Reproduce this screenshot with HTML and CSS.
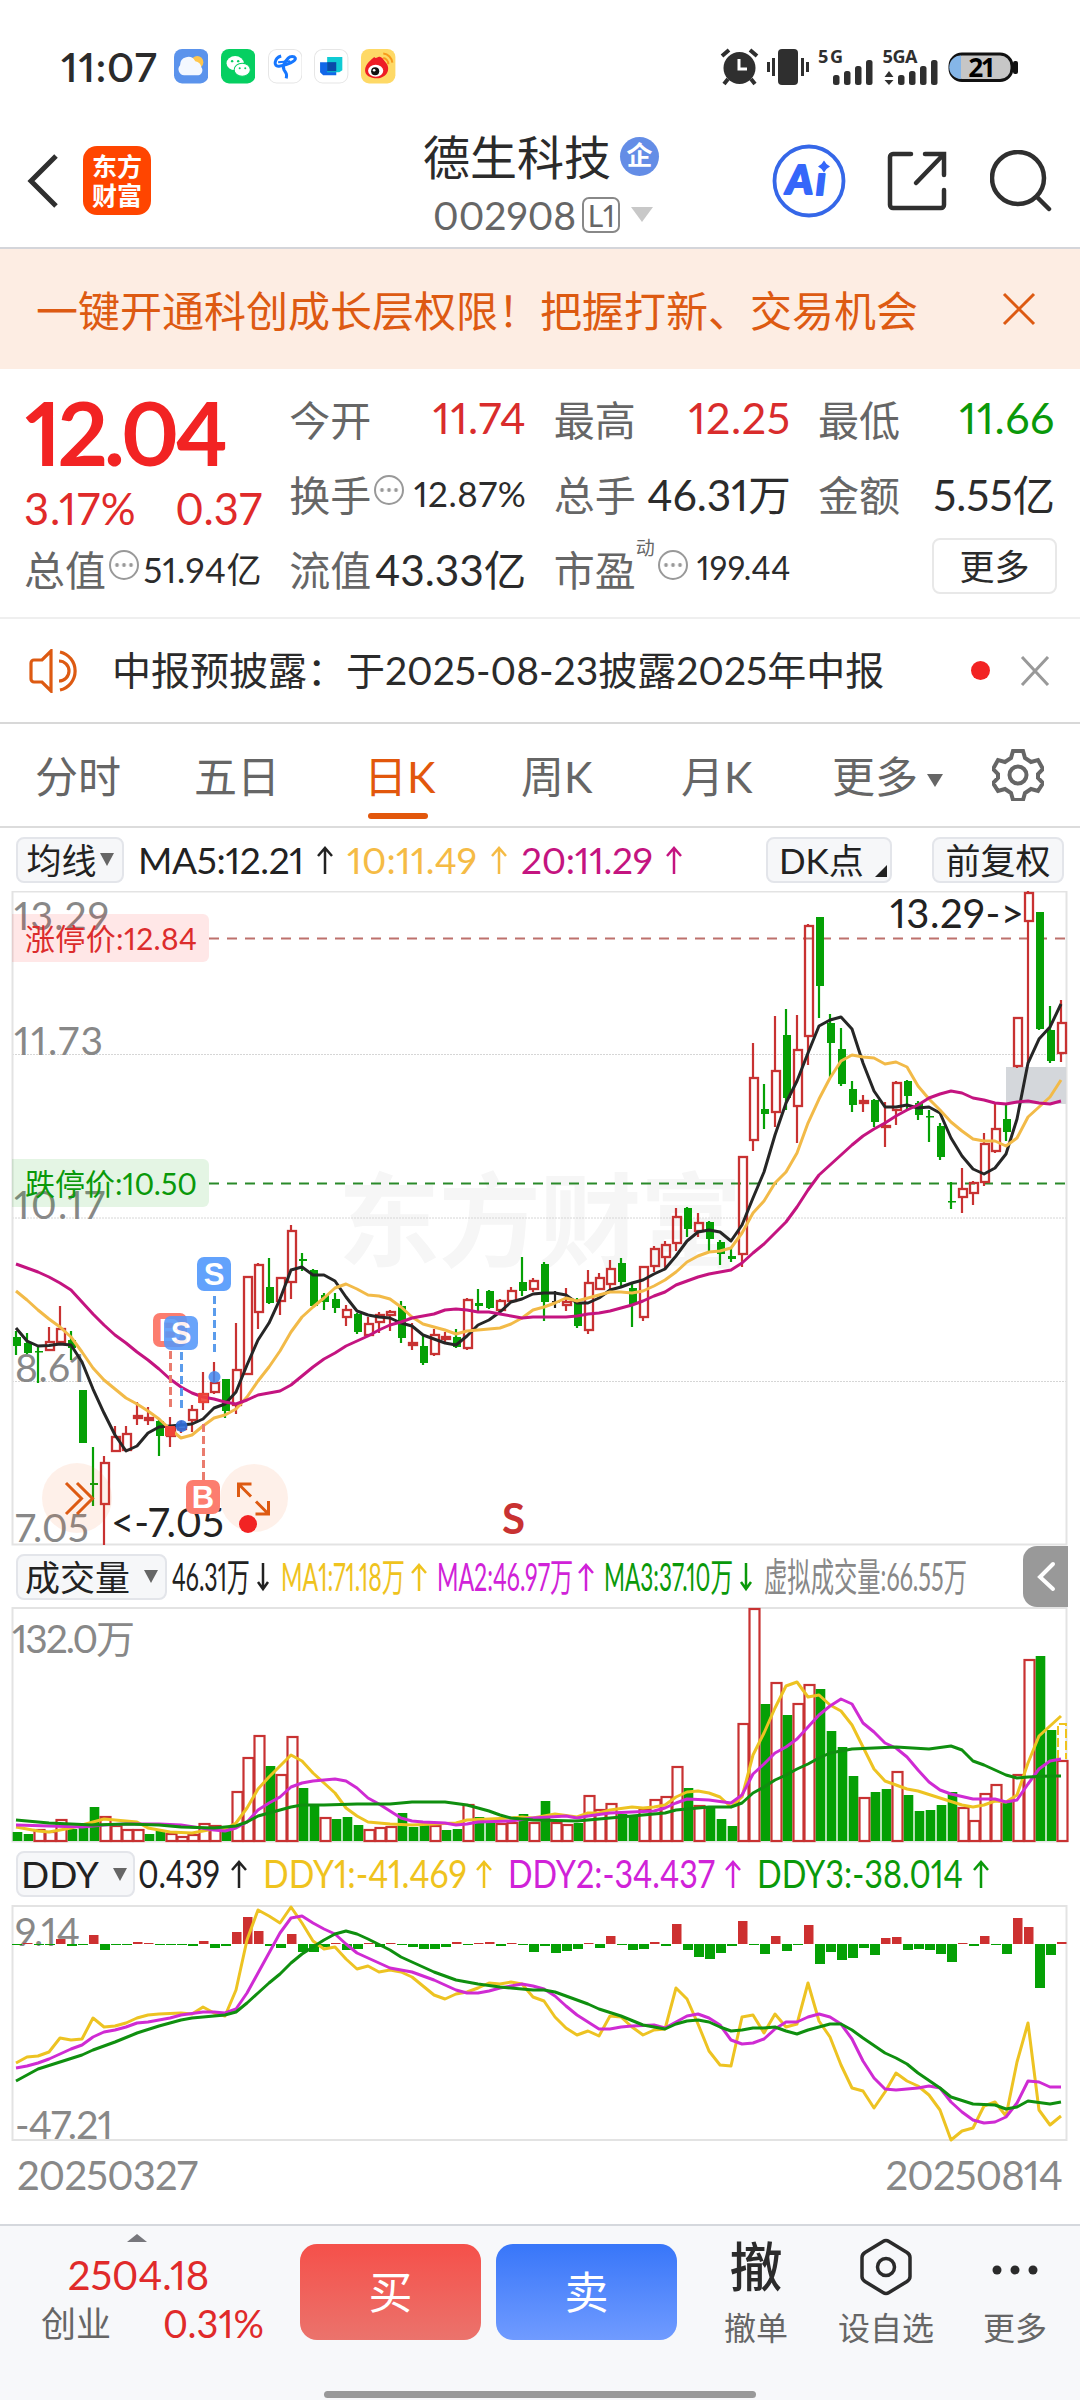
FILE: index.html
```html
<!DOCTYPE html>
<html lang="zh-CN">

<head>
    <meta charset="UTF-8">
    <meta name="viewport" content="width=device-width, initial-scale=1.0">
    <title>德生科技 002908</title>
    <link rel="stylesheet" href="styles.css">
</head>

<body>
    <div class="status-bar">
        <span class="clock">11:07</span>
        <div class="app-icons">
            <svg viewBox="0 0 34 34"><rect width="34" height="34" rx="8" fill="#5b93ec"/><circle cx="23" cy="13" r="6" fill="#ffc64d"/><path d="M10 26a6 6 0 0 1-4-10 8 8 0 0 1 15-4 7 7 0 0 1 6 6 5 5 0 0 1-3 8z" fill="#f4f8ff"/></svg>
            <svg viewBox="0 0 34 34"><rect width="34" height="34" rx="8" fill="#06cf61"/><ellipse cx="14" cy="14" rx="8.500" ry="7" fill="#fff"/><ellipse cx="21" cy="20.500" rx="8" ry="6.500" fill="#fff" stroke="#06cf61"/><circle cx="11" cy="12" r="1.200" fill="#06cf61"/><circle cx="17" cy="12" r="1.200" fill="#06cf61"/><circle cx="18.500" cy="19" r="1" fill="#06cf61"/><circle cx="24" cy="19" r="1" fill="#06cf61"/></svg>
            <svg viewBox="0 0 34 34"><rect x=".5" y=".5" width="33" height="33" rx="8" fill="#fff" stroke="#e6e6e6"/><path d="M13 7c-7 2-8 11-2 10 8-1 17-5 16-8-1-2-5-2-7 0-4 4-6 8-4 12 2 3 3 4 2 8" fill="none" stroke="#1677ff" stroke-width="3"/><path d="M10 13l12-1" stroke="#1677ff" stroke-width="2"/></svg>
            <svg viewBox="0 0 34 34"><rect x=".5" y=".5" width="33" height="33" rx="8" fill="#fff" stroke="#e6e6e6"/><path d="M6 13h16v13H9l-3-3z" fill="#1267e8"/><path d="M13 8h15v13l-3 2H13z" fill="#0fcbd4"/><path d="M13 13h9v9h-9z" fill="#0a4aa8"/></svg>
            <svg viewBox="0 0 34 34"><rect width="34" height="34" rx="8" fill="#fed966"/><path d="M4 21c0-6 7-11 9-13 3 3 3-3 8 1l4 5c4 5 2 14-9 15-7 0-12-3-12-8z" fill="#ee1c25"/><ellipse cx="14.500" cy="21.500" rx="7.500" ry="6" fill="#fff"/><circle cx="14" cy="22" r="4" fill="#111"/><circle cx="13" cy="21" r="1.300" fill="#fff"/><path d="M22 9a6 6 0 0 1 5 6M22 4.500a10 10 0 0 1 9 9" fill="none" stroke="#f79a1c" stroke-width="2"/></svg>
        </div>
        <svg class="system-icons" viewBox="718 46 304 42">
            <g fill="#2f2f2f">
                <circle cx="739.500" cy="68" r="16"/>
                <path d="M728 79l-4 5M751 79l4 5M722 56l7-6M757 56l-7-6" stroke="#2f2f2f" stroke-width="4"/>
                <path d="M739 59v10h8" fill="none" stroke="#fff" stroke-width="3"/>
                <rect x="778" y="49" width="20" height="36" rx="4"/>
                <path d="M773.500 58v18M768.500 62v10M802.500 58v18M807.500 62v10" stroke="#2f2f2f" stroke-width="3"/>
                <text x="818" y="62.500" class="net" textLength="25">5G</text>
                <text x="882.500" y="62.500" class="net" textLength="35">5GA</text>
                <rect x="833" y="75" width="6.500" height="10" rx="2.500"/><rect x="844" y="71" width="6.500" height="14" rx="2.500"/><rect x="855" y="66" width="6.500" height="19" rx="2.500"/><rect x="866" y="60" width="6.500" height="25" rx="2.500"/>
                <path d="M889 71l4.500 6h-9zM889 85l4.500-5h-9z"/>
                <rect x="898" y="75" width="6.500" height="10" rx="2.500"/><rect x="909" y="71" width="6.500" height="14" rx="2.500"/><rect x="920" y="66" width="6.500" height="19" rx="2.500"/><rect x="931" y="60" width="6.500" height="25" rx="2.500"/>
            </g>
            <rect x="950" y="54" width="62" height="26.500" rx="12" fill="#c6c6c6" stroke="#111" stroke-width="3"/>
            <path d="M961 55.500v23.500a11.500 11.500 0 0 1 0-23.500z" fill="#85b6e8"/>
            <rect x="1013" y="61" width="5" height="13" rx="2" fill="#111"/>
            <text x="982" y="76.500" class="battery" textLength="27">21</text>
        </svg>
    </div>

    <div class="header">
        <div class="header-left">
            <svg class="back" viewBox="0 0 32 56"><path d="M29 3L4 28l25 25"/></svg>
            <div class="logo"><span>东方</span><span>财富</span></div>
        </div>
        <div class="title">
            <div class="title-name">德生科技<span class="ent">企</span></div>
            <div class="title-code">002908<span class="level">L1</span><i class="tri tri-light"></i></div>
        </div>
        <div class="header-right">
            <svg class="ai" viewBox="0 0 74 74"><circle cx="37" cy="37" r="34.500"/><text x="14" y="50" textLength="27" lengthAdjust="spacingAndGlyphs">A</text><text x="44" y="51">ı</text><path d="M52 16.500l2.500 3.500 3.500 2.500-3.500 2.500-2.500 3.500-2.500-3.500-3.500-2.500 3.500-2.500z"/></svg>
            <svg class="share" viewBox="0 0 60 60"><path d="M24 3H6a3 3 0 0 0-3 3v48a3 3 0 0 0 3 3h48a3 3 0 0 0 3-3V39M38 3h19v21M56 4L29 32"/></svg>
            <svg class="search" viewBox="0 0 62 62"><circle cx="28" cy="28" r="26"/><path d="M47 47l12 12"/></svg>
        </div>
    </div>

    <div class="banner">
        <span>一键开通科创成长层权限！把握打新、交易机会</span>
        <svg viewBox="0 0 34 34"><path d="M2 2l30 30M32 2L2 32"/></svg>
    </div>

    <div class="quote">
        <div class="col first">
            <div class="price">12.04</div>
            <div class="change"><span>3.17%</span><span>0.37</span></div>
            <div class="row"><label>总值</label><i class="info"></i><b class="mid">51.94亿</b></div>
        </div>
        <div class="col">
            <div class="row"><label>今开</label><b class="red">11.74</b></div>
            <div class="row"><label>换手</label><i class="info"></i><b class="mid">12.87%</b></div>
            <div class="row"><label>流值</label><b class="big">43.33亿</b></div>
        </div>
        <div class="col">
            <div class="row"><label>最高</label><b class="red">12.25</b></div>
            <div class="row"><label>总手</label><b class="big">46.31万</b></div>
            <div class="row"><label>市盈</label><sup>动</sup><i class="info"></i><b class="small">199.44</b></div>
        </div>
        <div class="col">
            <div class="row"><label>最低</label><b class="green">11.66</b></div>
            <div class="row"><label>金额</label><b class="big">5.55亿</b></div>
            <div class="row"><button class="more-btn">更多</button></div>
        </div>
    </div>

    <div class="notice">
        <svg class="horn" viewBox="0 0 52 44"><path d="M22 2v40l-9-9H5a3 3 0 0 1-3-3V14a3 3 0 0 1 3-3h8zM30 12a10 10 0 0 1 0 20M31 3a19.500 19.500 0 0 1 0 38"/></svg>
        <span class="notice-text">中报预披露：于2025-08-23披露2025年中报</span>
        <i class="dot"></i>
        <svg class="close" viewBox="0 0 30 30"><path d="M2 1l26 28M28 1L2 29"/></svg>
    </div>

    <div class="tabs">
        <span class="tab">分时</span>
        <span class="tab">五日</span>
        <span class="tab active">日K</span>
        <span class="tab">周K</span>
        <span class="tab">月K</span>
        <span class="tab">更多<i class="tri"></i></span>
        <svg class="gear" viewBox="0 0 52 52"><path d="M21 2h10l2 7 6 4 7-2 5 9-5 5v4l5 5-5 8-7-2-6 4-2 7H21l-2-7-6-4-7 2-5-8 5-5v-4l-5-5 5-9 7 2 6-4z"/><circle cx="26" cy="26" r="8.500"/></svg>
    </div>

    <div class="legend legend-ma">
        <button class="chip">均线<i class="tri"></i></button>
        <svg class="legend-text" viewBox="139 827 560 64">
            <text x="138" y="873" textLength="166" fill="#222">MA5:12.21</text>
            <use href="#arrow" x="325" y="873" color="#222"/>
            <text x="347" y="873" textLength="130" fill="#f5bb45">10:11.49</text>
            <use href="#arrow" x="499" y="873" color="#f5bb45"/>
            <text x="521" y="873" textLength="132" fill="#c41480">20:11.29</text>
            <use href="#arrow" x="674" y="873" color="#c41480"/>
        </svg>
        <button class="chip chip-dk">DK点<i class="corner"></i></button>
        <button class="chip chip-fq">前复权</button>
    </div>
    <svg class="chart" id="kline" viewBox="0 891 1080 655"></svg>

    <div class="legend legend-vol">
        <button class="chip chip-vol">成交量<i class="tri"></i></button>
        <svg class="legend-text" viewBox="172 1546 810 61">
            <text x="172" y="1591" textLength="78" lengthAdjust="spacingAndGlyphs" fill="#222">46.31万</text>
            <use href="#arrow-down" x="263" y="1591" color="#222"/>
            <text x="281" y="1591" textLength="124" lengthAdjust="spacingAndGlyphs" fill="#efc31e">MA1:71.18万</text>
            <use href="#arrow" x="419" y="1591" color="#efc31e"/>
            <text x="437" y="1591" textLength="136" lengthAdjust="spacingAndGlyphs" fill="#d022d8">MA2:46.97万</text>
            <use href="#arrow" x="586" y="1591" color="#d022d8"/>
            <text x="604" y="1591" textLength="129" lengthAdjust="spacingAndGlyphs" fill="#0a990a">MA3:37.10万</text>
            <use href="#arrow-down" x="746" y="1591" color="#0a990a"/>
            <text x="764" y="1591" textLength="203" lengthAdjust="spacingAndGlyphs" fill="#888">虚拟成交量:66.55万</text>
        </svg>
        <svg class="side-tab" viewBox="0 0 45 61"><path d="M45 0H14A14 14 0 0 0 0 14v33a14 14 0 0 0 14 14h31z" fill="#999"/><path d="M30 18L17 31l13 12" fill="none" stroke="#fff" stroke-width="4" stroke-linecap="round"/></svg>
    </div>
    <svg class="chart" id="volume" viewBox="0 1607 1080 236"></svg>

    <div class="legend legend-ddy">
        <button class="chip chip-ddy">DDY<i class="tri"></i></button>
        <svg class="legend-text" viewBox="139 1843 860 62">
            <text x="138" y="1888" textLength="82" lengthAdjust="spacingAndGlyphs" fill="#222">0.439</text>
            <use href="#arrow" x="239" y="1888" color="#222"/>
            <text x="263" y="1888" textLength="204" lengthAdjust="spacingAndGlyphs" fill="#efc31e">DDY1:-41.469</text>
            <use href="#arrow" x="484" y="1888" color="#efc31e"/>
            <text x="508" y="1888" textLength="207" lengthAdjust="spacingAndGlyphs" fill="#d022d8">DDY2:-34.437</text>
            <use href="#arrow" x="733" y="1888" color="#d022d8"/>
            <text x="757" y="1888" textLength="206" lengthAdjust="spacingAndGlyphs" fill="#0a990a">DDY3:-38.014</text>
            <use href="#arrow" x="981" y="1888" color="#0a990a"/>
        </svg>
    </div>
    <svg class="chart" id="ddy" viewBox="0 1905 1080 237"></svg>
    <div class="dates"><span>20250327</span><span>20250814</span></div>

    <div class="footer">
        <div class="index">
            <i class="tri tri-up"></i>
            <div class="index-value">2504.18</div>
            <div class="index-row"><span>创业</span><b>0.31%</b></div>
        </div>
        <button class="trade buy">买</button>
        <button class="trade sell">卖</button>
        <div class="action cancel"><strong>撤</strong><span>撤单</span></div>
        <div class="action pick">
            <svg viewBox="0 0 52 58"><path d="M23 3.500q3-2 6 0l18 11q3 2 3 5v19q0 3-3 5l-18 11q-3 2-6 0l-18-11q-3-2-3-5v-19q0-3 3-5z"/><circle cx="26" cy="29" r="8.500"/></svg>
            <span>设自选</span>
        </div>
        <div class="action other">
            <svg viewBox="0 0 52 58"><g><circle cx="8" cy="32" r="4.500"/><circle cx="26" cy="32" r="4.500"/><circle cx="44" cy="32" r="4.500"/></g></svg>
            <span>更多</span>
        </div>
        <i class="home-bar"></i>
    </div>

    <svg class="defs">
        <symbol id="arrow" overflow="visible"><path d="M0 0V-26M-7-18L0-26L7-18" fill="none" stroke="currentColor" stroke-width="2.500"/></symbol>
        <symbol id="arrow-down" overflow="visible"><path d="M0-28V-2M-5-9L0-2L5-9" fill="none" stroke="currentColor" stroke-width="2.500"/></symbol>
    </svg>
    <script src="chart.js"></script>
</body>

</html>
```
FILE: styles.css
```css
* {
    box-sizing: border-box;
    margin: 0;
    padding: 0;
}

body {
    width: 1080px;
    height: 2400px;
    overflow: hidden;
    background: #fff;
    color: #2b2b2b;
    font-family: Lato, "Noto Sans CJK SC", sans-serif;
    font-variant-numeric: proportional-nums;
}

svg {
    display: block;
    flex: none;
}

b,
i {
    font-weight: normal;
    font-style: normal;
}

button {
    font-family: inherit;
    color: inherit;
    border: none;
}

.defs {
    width: 0;
    height: 0;
}

.tri {
    display: inline-block;
    border: 8px solid transparent;
    border-top: 13px solid #666;
    border-bottom: none;
}

/* status bar */
.status-bar {
    height: 112px;
    padding: 21px 58px 0 61px;
    display: flex;
    align-items: center;
}

.clock {
    width: 113px;
    font-size: 41px;
    font-weight: 600;
    letter-spacing: 0.8px;
    white-space: nowrap;
}

.app-icons {
    display: flex;
    gap: 12.4px;
}

.app-icons svg {
    width: 34.4px;
    height: 34.4px;
}

.system-icons {
    width: 304px;
    height: 42px;
    margin-left: auto;
}

.net {
    font-family: "Noto Sans", sans-serif;
    font-size: 18px;
    font-weight: bold;
}

.battery {
    font-family: "Noto Sans", sans-serif;
    font-size: 26px;
    font-weight: bold;
    text-anchor: middle;
}

/* header */
.header {
    height: 137px;
    display: grid;
    grid-template-columns: 1fr 1fr 1fr;
    border-bottom: 2px solid #d4d5da;
}

.header-left {
    display: flex;
    align-items: center;
    padding: 2px 0 0 27px;
    gap: 24px;
}

.back {
    width: 32px;
    height: 56px;
    fill: none;
    stroke: #2f2f2f;
    stroke-width: 5;
}

.logo {
    width: 68px;
    height: 69px;
    border-radius: 14px;
    background: #ff4500;
    color: #fff;
    font-size: 25px;
    font-weight: bold;
    line-height: 29px;
    display: flex;
    flex-direction: column;
    align-items: center;
    justify-content: center;
}

.title {
    display: flex;
    flex-direction: column;
    padding-left: 63px;
}

.title-name {
    display: flex;
    align-items: center;
    height: 67px;
    padding-top: 17px;
    font-size: 47px;
    white-space: nowrap;
}

.ent {
    width: 39px;
    height: 39px;
    border-radius: 50%;
    margin-left: 9px;
    margin-top: 5px;
    background: #648de6;
    color: #fff;
    font-size: 26px;
    font-weight: bold;
    line-height: 36px;
    text-align: center;
}

.title-code {
    display: flex;
    align-items: center;
    height: 62px;
    padding: 9px 0 0 10px;
    color: #666;
    font-size: 39px;
}

.level {
    width: 38px;
    height: 36px;
    margin-left: -3px;
    border: 2px solid #888;
    border-radius: 7px;
    font-size: 30px;
    line-height: 32px;
    text-align: center;
}

.title-code .level {
    margin-left: 6px;
}

.tri-light {
    margin-left: 11px;
    margin-top: -1px;
    border-width: 15px 11.5px 0;
    border-top-color: #c8c8c8;
}

.header-right {
    display: flex;
    align-items: center;
    padding: 2px 0 0 52px;
}

.ai {
    width: 74px;
    height: 74px;
    fill: #3567fa;
}

.ai circle {
    fill: none;
    stroke: #3567e8;
    stroke-width: 3.8;
}

.ai text {
    font-size: 39px;
    font-weight: 900;
    font-style: italic;
    stroke: #3567fa;
    stroke-width: 2;
    stroke-linejoin: round;
}

.share {
    width: 60px;
    height: 60px;
    margin-left: 41px;
}

.search {
    width: 62px;
    height: 62px;
    margin-left: 43px;
}

.share,
.search {
    fill: none;
    stroke: #2f2f2f;
    stroke-width: 4.5;
    stroke-linecap: round;
}

/* banner */
.banner {
    height: 120px;
    padding: 0 44px 0 36px;
    display: flex;
    align-items: center;
    justify-content: space-between;
    background: #fdede3;
    color: #dd5a12;
    font-size: 42px;
}

.banner span {
    padding-bottom: 2px;
}

.banner svg {
    width: 34px;
    height: 34px;
    stroke: #dd5a12;
    stroke-width: 3;
}

/* quote */
.quote {
    height: 250px;
    padding: 11px 25px 0 24px;
    display: flex;
    justify-content: space-between;
    border-bottom: 2px solid #efefef;
}

.col {
    width: 237px;
}

.col.first {
    width: 238px;
}

.price {
    height: 102px;
    line-height: 104px;
    margin-left: 1px;
    font-size: 88px;
    font-weight: bold;
    letter-spacing: -3.8px;
    color: #f22323;
}

.change {
    height: 48px;
    line-height: 52px;
    display: flex;
    justify-content: space-between;
    font-size: 43.5px;
    color: #e02a2a;
}

.change span:first-child {
    letter-spacing: 0.8px;
}

.row {
    height: 75px;
    display: flex;
    align-items: center;
    white-space: nowrap;
}

.row label {
    font-size: 41px;
    color: #666;
}

.row b {
    margin-left: auto;
    font-size: 42px;
}

.row .red,
.row .green {
    font-size: 43px;
    letter-spacing: 0.6px;
}

.row .big {
    font-size: 42.5px;
}

.row .mid {
    font-size: 35px;
    letter-spacing: 0.6px;
}

.row .small {
    font-size: 32px;
    letter-spacing: 0.4px;
}

.red {
    color: #d92c2c;
}

.green {
    color: #0a990a;
}

.info {
    width: 30px;
    height: 30px;
    margin-left: 3px;
    margin-top: -6px;
    border: 2px solid #999;
    border-radius: 50%;
    background: radial-gradient(circle, #999 1.6px, transparent 2.2px) center / 7px 26px repeat-x content-box;
    padding: 0 3px;
}

.row sup {
    font-size: 19px;
    margin-top: -42px;
    color: #666;
}

.more-btn {
    width: 125px;
    height: 56px;
    margin: -3px -2px 0 auto;
    border: 2px solid #e8e8e8;
    border-radius: 8px;
    background: #fff;
    font-size: 35px;
    line-height: 48px;
}

/* notice */
.notice {
    height: 105px;
    display: flex;
    align-items: center;
    border-bottom: 2px solid #d8d8d8;
}

.horn {
    width: 52px;
    height: 44px;
    margin-left: 29px;
    fill: none;
    stroke: #dd5a12;
    stroke-width: 3.2;
}

.notice-text {
    width: 838px;
    margin-left: 31px;
    padding-bottom: 5px;
    font-size: 39px;
    white-space: nowrap;
}

.dot {
    width: 19px;
    height: 19px;
    margin-left: 21px;
    border-radius: 50%;
    background: #f22323;
}

.close {
    width: 30px;
    height: 30px;
    margin-left: 30px;
    stroke: #999;
    stroke-width: 3;
}

/* tabs */
.tabs {
    height: 104px;
    padding-left: 35px;
    display: grid;
    grid-template-columns: 159px 170px 157px 160px 151px 160px 52px;
    align-items: center;
    border-bottom: 2px solid #dcdcdc;
    font-size: 43px;
    color: #666;
}

.tab {
    height: 102px;
    padding-top: 4px;
    line-height: 98px;
    white-space: nowrap;
}

.tab .tri {
    margin-left: 9px;
    vertical-align: 6px;
}

.tab.active {
    color: #e2570c;
}

.tab.active::after {
    content: "";
    display: block;
    width: 60px;
    height: 6px;
    margin: -13px 0 0 4px;
    border-radius: 3px;
    background: #e2570c;
}

.gear {
    width: 52px;
    height: 52px;
    fill: none;
    stroke: #666;
    stroke-width: 4;
}

/* chart legends */
.legend {
    display: flex;
    align-items: center;
    padding-left: 16px;
}

.legend-ma {
    height: 63px;
}

.legend-vol {
    height: 61px;
}

.legend-ddy {
    height: 62px;
}

.chip {
    flex: none;
    width: 108px;
    height: 46px;
    display: flex;
    align-items: center;
    justify-content: center;
    border: 2px solid #e3e5ea;
    border-radius: 8px;
    background: #f6f7f9;
    font-size: 35px;
    line-height: 40px;
    white-space: nowrap;
    color: #222;
}

.chip .tri {
    border-width: 13px 7.5px 0;
    margin-left: 3px;
}

.legend-text {
    font-size: 39px;
}

.legend-ma .legend-text {
    width: 560px;
    height: 64px;
    margin-left: 15px;
    font-size: 37px;
}

.chip-dk {
    width: 126px;
    margin-left: 67px;
    justify-content: flex-start;
    padding-left: 11px;
}

.chip-dk .corner {
    align-self: flex-end;
    margin: 0 0 4px 11px;
    border-left: 12px solid transparent;
    border-bottom: 12px solid #222;
}

.chip-fq {
    width: 132px;
    margin-left: 40px;
}

.chip-vol {
    width: 151px;
}

.chip-vol .tri,
.chip-ddy .tri {
    margin-left: 14px;
}

.legend-vol .legend-text {
    width: 810px;
    height: 61px;
    margin-left: 5px;
}

.side-tab {
    width: 45px;
    height: 61px;
    margin-left: 41px;
}

.chip-ddy {
    width: 119px;
    padding-right: 3px;
    font-size: 37px;
}

.legend-ddy .legend-text {
    width: 860px;
    height: 62px;
    margin-left: 4px;
}

/* charts */
.chart {
    width: 1080px;
}

.axis {
    font-size: 39px;
    fill: #888;
}

.frame {
    fill: none;
    stroke: #e3e3e3;
    stroke-width: 2;
}

.line {
    fill: none;
    stroke-width: 3;
    stroke-linejoin: round;
}

.note {
    font-size: 40px;
    fill: #222;
}

.signal {
    font-size: 42px;
    font-weight: bold;
    fill: #c83232;
}

.limit {
    font-size: 30px;
}

.watermark {
    font-size: 102px;
    font-weight: bold;
    fill: #f6f6f6;
}

.mark {
    font-family: "Liberation Sans", sans-serif;
    font-size: 31px;
    font-weight: bold;
    fill: #fff;
    text-anchor: middle;
}

.dates {
    height: 82px;
    padding: 0 18px 0 17px;
    display: flex;
    justify-content: space-between;
    font-size: 40px;
    letter-spacing: -0.8px;
    line-height: 67px;
    color: #888;
}

/* footer */
.footer {
    position: relative;
    height: 177px;
    display: flex;
    align-items: flex-start;
    background: #f7f8fa;
    border-top: 2px solid #d5d8dd;
}

.index {
    width: 277px;
    height: 120px;
    padding-top: 8px;
    text-align: center;
    color: #e02a2a;
}

.tri-up {
    display: block;
    width: 0;
    margin-left: 127px;
    border: 10px solid transparent;
    border-bottom: 8px solid #77777c;
    border-top: none;
}

.index-value {
    height: 56px;
    margin-top: 4px;
    font-size: 40px;
    line-height: 58px;
}

.index-row {
    display: flex;
    justify-content: space-between;
    padding: 0 13px 0 41px;
    line-height: 42px;
    font-size: 35px;
    color: #666;
}

.index-row b {
    font-size: 38px;
    color: #e02a2a;
}

.trade {
    width: 181px;
    height: 96px;
    margin: 18px 0 0 23px;
    padding-bottom: 4px;
    border-radius: 17px;
    color: #fff;
    font-size: 44px;
}

.buy {
    background: linear-gradient(#f5504a, #eb736c);
}

.sell {
    margin-left: 15px;
    background: linear-gradient(#3876f9, #709bff);
}

.action {
    display: flex;
    flex-direction: column;
    align-items: center;
    padding-top: 12px;
    font-size: 32px;
    color: #666;
}

.action span {
    line-height: 38px;
}

.action strong {
    height: 58px;
    margin-bottom: 13px;
    font-size: 53px;
    font-weight: 500;
    line-height: 58px;
    color: #2b2b2b;
}

.action svg {
    width: 52px;
    height: 58px;
    margin-bottom: 13px;
    fill: none;
    stroke: #2b2b2b;
    stroke-width: 3.5;
}

.action g {
    fill: #2b2b2b;
    stroke: none;
}

.cancel {
    margin-left: 47px;
}

.pick {
    margin-left: 50px;
}

.other {
    margin-left: 49px;
}

.home-bar {
    position: absolute;
    left: 324px;
    bottom: 3px;
    width: 432px;
    height: 7px;
    border-radius: 4px;
    background: #999;
}
```
FILE: chart.js
```js
const STEP = 11;
const X0 = 16;
const RED = "#c83232";
const GREEN = "#05a005";

// high, low, body top, body bottom, colour
const candles = `1331,1355,1337,1346,g 1333,1354,1343,1353,g 1347,1383,1351,1352,g 1327,1351,1341,1351,r
1306,1343,1328,1343,r 1331,1360,1340,1348,g 1390,1443,1390,1443,g 1447,1506,1483,1485,g 1456,1545,1462,1505,r
1426,1452,1436,1452,r 1426,1451,1433,1451,r 1402,1425,1415,1419,r 1407,1425,1417,1421,r 1418,1456,1421,1436,g
1417,1447,1426,1437,r 1421,1433,1424,1430,r 1405,1432,1409,1421,r 1372,1410,1393,1403,r 1362,1394,1382,1393,r
1379,1418,1379,1411,g 1323,1414,1369,1406,r 1276,1375,1276,1375,r 1263,1329,1264,1313,r 1258,1304,1287,1303,g
1277,1315,1277,1302,r 1225,1299,1230,1283,r 1253,1271,1259,1261,g 1269,1306,1270,1306,g 1293,1310,1295,1302,g
1293,1313,1299,1308,g 1305,1326,1309,1318,r 1313,1334,1314,1332,g 1317,1336,1323,1336,r 1312,1333,1314,1323,r
1310,1331,1311,1316,r 1301,1343,1306,1338,g 1323,1350,1342,1346,r 1334,1365,1346,1363,g 1329,1356,1334,1355,r
1332,1343,1336,1340,r 1329,1348,1337,1347,g 1298,1350,1299,1349,r 1289,1313,1303,1306,g 1290,1309,1291,1308,g
1299,1312,1300,1311,r 1287,1303,1290,1302,r 1257,1296,1282,1291,g 1278,1292,1280,1290,r 1262,1321,1264,1302,g
1291,1308,1301,1302,k 1288,1311,1301,1306,r 1298,1328,1302,1326,g 1270,1334,1282,1331,r 1273,1290,1277,1290,r
1260,1291,1268,1285,r 1258,1287,1263,1282,g 1283,1327,1288,1305,g 1266,1321,1266,1318,r 1246,1272,1248,1267,r
1241,1268,1244,1258,r 1208,1251,1216,1244,r 1207,1237,1208,1229,g 1213,1237,1222,1232,r 1221,1252,1222,1239,g
1240,1265,1242,1254,g 1248,1262,1256,1259,g 1156,1267,1156,1255,r 1043,1151,1077,1141,r 1084,1129,1109,1114,g
1016,1127,1070,1113,r 1009,1110,1035,1098,g 1015,1143,1049,1107,r 924,1065,925,1037,r 917,1018,917,986,g
1014,1077,1023,1043,g 1028,1086,1049,1084,g 1081,1112,1089,1105,g 1095,1112,1100,1104,r 1099,1127,1100,1122,g
1102,1147,1125,1127,r 1081,1125,1082,1111,r 1080,1109,1081,1096,g 1101,1120,1103,1115,g 1110,1142,1116,1117,g
1123,1160,1126,1157,g 1182,1209,1201,1202,g 1168,1213,1188,1198,r 1181,1205,1182,1194,r 1133,1186,1143,1183,r
1103,1153,1128,1152,r 1105,1141,1119,1132,g 1017,1068,1017,1067,r 891,1063,892,922,r 912,1030,912,1029,g
1006,1063,1030,1061,g 1000,1062,1022,1054,r`.split(/\s+/).map(s => s.split(","));

const ma5 = [1328,1341,1346,1345.5,1344,1345,1362,1389,1413,1435,1451,1446,1433,1427,1426,1425,1424,1419,1408,1404,1392,1365,1340,1323,1299,1270,1267,1275,1275,1281,1297,1311,1315,1317,1318,1323,1326,1335,1339,1343,1345,1336,1325,1320,1312,1302,1299,1294,1293,1293,1295,1303,1303,1298,1290,1287,1283,1280,1274,1269,1256,1241,1232,1230,1232,1241,1225,1198,1172,1135,1103,1081,1053,1026,1020,1017,1029,1063,1091,1107,1107,1105,1108,1107,1113,1138,1156,1169,1174,1168,1154,1119,1063,1039,1027,1004];
const ma10 = [1291,1300,1310,1319,1327,1337,1352,1368,1380,1389,1398,1404,1411,1419,1429,1438,1435,1426,1418,1415,1409,1397,1381,1367,1351,1332,1317,1307,1298,1288,1284,1289,1295,1296,1299,1307,1317,1324,1327,1330,1334,1331,1330,1329,1328,1324,1318,1310,1307,1303,1298,1301,1298,1295,1292,1292,1293,1291,1286,1280,1272,1262,1256,1252,1251,1248,1233,1213,1201,1183,1172,1153,1123,1099,1078,1061,1055,1057,1058,1064,1062,1067,1086,1099,1110,1122,1131,1139,1141,1141,1146,1138,1117,1107,1097,1080];
const ma20 = [1264,1268,1272,1277,1283,1290,1302,1314,1325,1335,1343,1352,1360,1369,1379,1387,1393,1397,1399,1402,1404,1400,1395,1393,1391,1385,1376,1367,1359,1353,1346,1341,1336,1330,1325,1322,1318,1316,1314,1310,1309,1310,1312,1312,1314,1316,1318,1317,1317,1317,1317,1316,1314,1313,1311,1308,1305,1301,1296,1292,1285,1281,1277,1274,1272,1270,1263,1253,1244,1233,1222,1207,1190,1175,1165,1155,1145,1136,1129,1123,1116,1110,1105,1098,1094,1091,1093,1098,1100,1103,1104,1102,1101,1103,1104,1101];

const volumes = "g9 g7 r12 r10 r22 g12 g13 g34 r25 r16 r12 r12 g7 g10 r8 r5 r7 r18 r16 g14 r50 r84 r106 g75 r67 r105 g53 g37 r24 g22 g24 g16 r12 r14 r15 g28 g14 g16 r16 g11 g12 r37 g24 g19 r18 r19 g27 r19 g40 r19 r17 g18 r46 r32 r38 g27 g26 r33 r42 r45 r75 g53 r36 g33 g22 g15 r118 r233 g137 r159 g126 r138 r157 g152 g110 g94 g65 r44 g49 g52 r70 g46 g30 g31 g36 g49 r34 r21 r48 r57 g39 r67 r182 g185 g111 r81".split(" ");
const volMa1 = "0,1827 1,1829 2,1831 3,1832 4,1830 5,1828 6,1825 7,1822 8,1819 9,1820 11,1822 12,1828 13,1830 14,1832 16,1833 17,1831 18,1829 19,1829 20,1823 21,1808 22,1789 23,1777 24,1766 25,1755 26,1761 27,1773 28,1783 29,1793 30,1808 31,1816 32,1822 33,1823 34,1824 36,1825 38,1824 40,1823 41,1820 43,1819 45,1818 46,1817 47,1818 48,1816 49,1814 51,1817 52,1813 53,1813 54,1810 56,1807 57,1808 58,1807 59,1805 60,1797 61,1792 62,1791 63,1793 64,1797 65,1807 66,1797 67,1755 68,1733 69,1708 70,1686 71,1682 72,1697 73,1695 74,1705 75,1711 76,1725 77,1747 78,1769 79,1781 80,1785 81,1789 82,1791 84,1798 86,1805 87,1807 88,1805 89,1801 90,1802 91,1795 92,1763 93,1736 94,1726 95,1716";
const volMa2 = "0,1825 3,1826 6,1827 8,1825 10,1824 13,1824 15,1825 18,1830 19,1831 20,1828 21,1822 22,1810 23,1803 24,1797 25,1787 26,1783 27,1781 28,1780 29,1779 30,1781 31,1788 32,1798 33,1804 34,1811 35,1818 36,1821 37,1822 39,1823 40,1825 41,1824 42,1822 45,1821 47,1818 50,1816 51,1818 52,1816 54,1813 58,1811 59,1808 60,1803 61,1799 63,1800 65,1803 66,1795 67,1774 68,1764 69,1753 70,1747 71,1739 72,1727 73,1715 74,1706 75,1699 76,1704 77,1723 78,1732 79,1743 80,1748 81,1757 82,1770 83,1782 84,1790 85,1794 87,1799 89,1799 90,1802 91,1800 92,1784 93,1769 94,1761 95,1759";
const volMa3 = "0,1820 3,1823 7,1825 10,1824 13,1825 15,1827 18,1828 20,1826 21,1822 22,1816 23,1813 24,1810 25,1807 26,1805 28,1805 31,1804 34,1804 36,1802 39,1802 41,1805 43,1811 44,1815 45,1818 47,1820 51,1821 53,1819 56,1816 59,1813 60,1810 63,1807 65,1807 66,1803 67,1793 68,1787 69,1780 70,1775 71,1769 72,1764 73,1758 74,1753 75,1751 76,1749 78,1748 80,1747 83,1749 85,1746 86,1750 87,1761 88,1765 89,1770 90,1775 91,1778 92,1777 94,1776 95,1776";

const ddyBars = [-1,1,-1,-1,5,-2,-1,9,-6,-1,-1,2,1,-1,-1,-1,-2,3,-4,-2,12,27,13,-2,-4,10,-8,-8,-3,1,-6,-5,1,-3,1,-1,-3,-5,-5,-3,2,-1,1,2,-2,1,-1,-8,-2,-9,-7,-5,1,-4,8,-1,-6,-5,2,-2,20,-6,-13,-15,-9,-2,23,-1,-10,8,-7,-1,19,-20,-8,-16,-14,-4,-11,6,7,-6,-5,-6,-10,-18,1,-2,8,-1,-10,26,17,-44,-11,2];
const ddy1 = "0,2063 1,2057 2,2056 3,2052 4,2038 5,2040 6,2039 7,2018 8,2027 9,2026 10,2023 11,2018 12,2015 13,2014 15,2013 16,2014 17,2007 18,2013 19,2016 20,1990 21,1940 22,1910 23,1916 24,1923 25,1907 26,1923 27,1941 28,1949 29,1947 30,1959 31,1969 32,1966 33,1972 34,1970 35,1972 36,1977 37,1986 38,1995 39,1999 40,1994 41,1992 42,1988 43,1983 44,1984 45,1982 46,1984 47,1997 48,2001 49,2017 50,2028 51,2035 52,2031 53,2036 54,2016 55,2017 56,2027 57,2035 58,2030 59,2029 60,1988 61,1999 62,2024 63,2051 64,2065 65,2066 66,2017 67,2015 68,2033 69,2014 70,2027 71,2024 72,1983 73,2021 74,2037 75,2065 76,2088 77,2091 78,2108 79,2092 80,2073 81,2081 82,2086 83,2095 84,2110 85,2140 86,2131 87,2128 88,2106 89,2102 90,2116 91,2062 92,2023 93,2110 94,2125 95,2116";
const ddy2 = "0,2068 1,2066 2,2063 3,2059 4,2054 5,2049 6,2045 7,2037 8,2032 9,2030 10,2027 11,2023 12,2022 14,2018 15,2015 17,2012 18,2012 19,2013 20,2009 21,1993 22,1973 23,1953 24,1933 25,1918 26,1916 27,1923 28,1929 29,1934 30,1944 31,1953 32,1958 33,1963 34,1968 35,1970 36,1972 38,1980 39,1985 40,1990 41,1993 42,1993 43,1991 44,1988 46,1984 47,1986 48,1989 49,1996 50,2006 51,2015 52,2022 53,2029 54,2029 55,2027 56,2026 58,2025 59,2028 60,2022 61,2016 62,2014 63,2018 64,2025 65,2040 66,2044 67,2043 68,2039 69,2029 70,2022 71,2022 72,2017 73,2014 74,2017 75,2024 76,2039 77,2061 78,2078 79,2089 80,2090 82,2088 83,2086 84,2088 85,2102 86,2112 87,2120 88,2123 89,2122 90,2117 91,2103 92,2081 93,2082 94,2087 95,2087";
const ddy3 = "0,2081 1,2075 2,2069 4,2062 6,2055 7,2050 9,2042 11,2033 13,2026 15,2020 16,2018 19,2015 20,2012 21,2003 22,1993 23,1983 24,1974 25,1963 26,1954 27,1947 28,1940 29,1934 30,1931 31,1934 32,1939 34,1950 35,1957 36,1962 38,1972 39,1976 40,1980 42,1984 44,1987 47,1990 48,1990 49,1992 50,1996 52,2004 53,2009 55,2016 57,2025 58,2027 59,2029 60,2024 61,2021 62,2020 63,2022 64,2027 65,2031 66,2030 67,2028 68,2028 69,2027 70,2031 71,2034 72,2030 73,2027 74,2024 75,2024 76,2030 77,2038 79,2053 80,2058 81,2064 82,2073 84,2088 85,2097 87,2104 89,2105 90,2109 91,2107 92,2101 94,2104 95,2102";

function line(data, color) {
    const pairs = Array.isArray(data)
        ? data.map((y, i) => [i, y])
        : data.split(" ").map(p => p.split(","));
    const points = pairs.map(([i, y]) => `${X0 + STEP * i},${y}`).join(" ");
    return `<polyline class="line" points="${points}" stroke="${color}"/>`;
}

function label(x, y, width, text, cls = "axis", extra = "") {
    return `<text class="${cls}" x="${x}" y="${y}" textLength="${width}" ${extra}>${text}</text>`;
}

function limitTag(y, text, fg, bg, dash) {
    return `<path d="M12 ${y}h191a6 6 0 0 1 6 6v36a6 6 0 0 1-6 6H12z" fill="${bg}"/>
        <path d="M209 ${y + 24.5}H1066" stroke="${dash}" stroke-width="1.800" stroke-dasharray="10 8"/>
        ${label(25, y + 36, 172, text, "limit", `fill="${fg}"`)}`;
}

function mark(x, y, letter, color) {
    return `<rect x="${x}" y="${y}" width="34" height="34" rx="7" fill="${color}"/>
        <text class="mark" x="${x + 17}" y="${y + 28}">${letter}</text>`;
}

function dashed(x, y1, y2, color) {
    return `<path d="M${x} ${y1}V${y2}" stroke="${color}" stroke-width="3" stroke-dasharray="8 4"/>`;
}

// candles
let k = `<text class="watermark" x="338" y="1259" textLength="404">东方财富</text>
    <path d="M12 1054.500H1067M12 1218H1067M12 1381.500H1067" stroke="#d6d6d6" stroke-width="1" stroke-dasharray="2 1"/>
    <rect class="frame" x="12.500" y="891.500" width="1054" height="653"/>
    <rect x="1006" y="1067" width="60" height="37" fill="#d4d7db"/>`;
k += label(14, 930, 95, "13.29") + label(14, 1055, 89, "11.73") + label(14, 1219, 91, "10.17")
    + label(15, 1382, 70, "8.61") + label(15, 1542, 74, "7.05");
k += limitTag(914, "涨停价:12.84", "#dc2c2c", "rgba(255,20,20,.1)", "#bd716c");
k += limitTag(1159, "跌停价:10.50", "#0a990a", "rgba(10,160,10,.11)", "#2a8a2a");
candles.forEach(([hi, lo, top, bot, c], i) => {
    const x = X0 + STEP * i;
    [hi, lo, top, bot] = [+hi, +lo, +top, +bot];
    if (c === "r") {
        k += `<path d="M${x} ${hi}V${top}M${x} ${bot}V${lo}" stroke="${RED}" stroke-width="2.200"/>
            <rect x="${x - 3}" y="${top + 1}" width="8" height="${Math.max(bot - top - 2, 1)}" fill="none" stroke="${RED}" stroke-width="2.300"/>`;
    } else {
        const color = c === "g" ? GREEN : "#222";
        k += `<path d="M${x} ${hi}V${lo}" stroke="${color}" stroke-width="2.200"/>
            <rect x="${x - 3}" y="${top}" width="8" height="${Math.max(bot - top, 1.5)}" fill="${color}"/>`;
    }
});
k += line(ma5, "#262626") + line(ma10, "#f2ba48") + line(ma20, "#c41480");
k += label(890, 928, 134, "13.29-&gt;", "note") + label(111, 1537, 113, "&lt;-7.05", "note");
k += `<text class="signal" x="502" y="1534">S</text>`;
// trade markers
k += dashed(170.5, 1351, 1407, "#ea7c6e") + dashed(181.5, 1352, 1410, "#5b9cec")
    + dashed(203.5, 1424, 1480, "#ea7c6e") + dashed(214.5, 1296, 1355, "#5b9cec");
k += `<rect x="165" y="1426" width="10" height="10" fill="#f04438"/><rect x="198" y="1393" width="10" height="10" fill="#f04438" opacity=".9"/>
    <circle cx="181.500" cy="1426" r="6" fill="#2f6fdc" opacity=".9"/><circle cx="214.500" cy="1377" r="6" fill="#3f86ee" opacity=".85"/>`;
k += mark(153, 1313, "B", "#fc7d6f") + `<g opacity=".88">${mark(164, 1316, "S", "#5598fa")}</g>`
    + mark(197, 1257, "S", "#62a2fc") + mark(186, 1480, "B", "#fc7d6f");
// floating buttons
k += `<g fill="rgba(250,110,40,.1)"><circle cx="77" cy="1498" r="35"/><circle cx="254" cy="1498" r="34"/></g>
    <g fill="none" stroke="#dd5a12" stroke-width="3"><path d="M66 1483l15.500 15.500L66 1514M77 1483l15.500 15.500L77 1514"/>
    <path d="M238.500 1497v-13h13M239 1484.500l12 12M268.500 1501v13h-13M268 1513.500l-12-12"/></g>
    <circle cx="248" cy="1524" r="9" fill="#f22323"/>`;
document.getElementById("kline").innerHTML = k;

// volume
let v = `<rect class="frame" x="12.500" y="1608" width="1054" height="233.500"/>` + label(12, 1653, 123, "132.0万");
volumes.forEach((s, i) => {
    const x = 12 + STEP * i;
    const h = +s.slice(1);
    if (s[0] === "r") {
        v += `<rect x="${x + 0.5}" y="${1842 - h}" width="${STEP - 1}" height="${h - 1}" fill="#fff" stroke="${RED}" stroke-width="2.200"/>`;
    } else {
        v += `<rect x="${x + 0.7}" y="${1841 - h}" width="9.600" height="${h}" fill="${GREEN}"/>`;
    }
});
// projected volume for today
v += `<path d="M1058 1759V1724H1066V1759" fill="none" stroke="#efc31e" stroke-width="2" stroke-dasharray="9 3"/>`;
v += line(volMa1, "#edc322") + line(volMa2, "#cf2bd3") + line(volMa3, "#0f8f0f");
document.getElementById("volume").innerHTML = v;

// DDY
let d = `<rect class="frame" x="12.500" y="1906" width="1054" height="234"/>`;
d += label(15, 1946, 65, "9.14") + label(15, 2139, 98, "-47.21");
ddyBars.forEach((h, i) => {
    const x = 12 + STEP * i;
    d += h > 0
        ? `<rect x="${x}" y="${1944 - h}" width="9.500" height="${h}" fill="#cd3030"/>`
        : `<rect x="${x}" y="1944" width="10" height="${-h}" fill="${GREEN}"/>`;
});
d += line(ddy1, "#edc322") + line(ddy2, "#cf2bd3") + line(ddy3, "#0f8f0f");
document.getElementById("ddy").innerHTML = d;
```
